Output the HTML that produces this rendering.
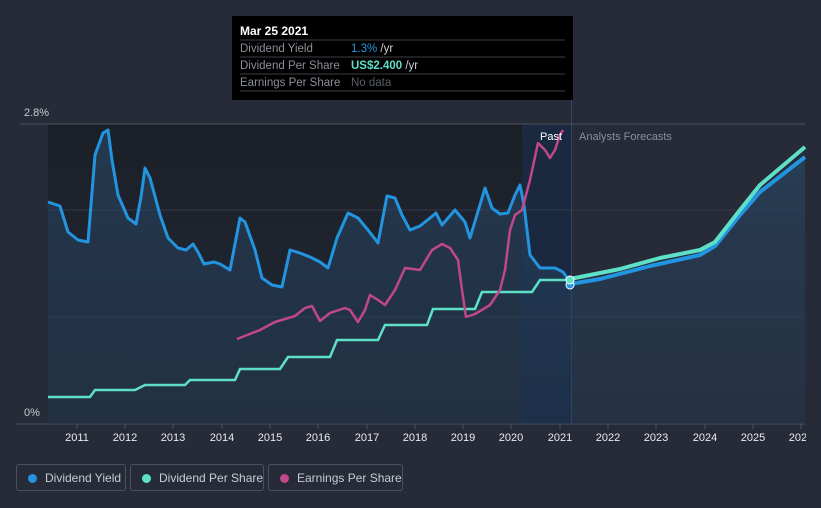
<!DOCTYPE html>
<html><head><style>
body{margin:0;width:821px;height:508px;background:#262b37;font-family:"Liberation Sans",sans-serif;overflow:hidden;position:relative}
.lg{position:absolute;top:464px;height:27px;border:1px solid #4a505c;border-radius:3px;color:#c8ccd2;font-size:12px;line-height:27px;box-sizing:border-box;white-space:nowrap}
.lg i{position:absolute;left:11px;top:9px;width:9px;height:9px;border-radius:50%}
</style></head><body>
<svg width="821" height="508" style="position:absolute;left:0;top:0">
<defs>
<linearGradient id="pg" x1="0" y1="0" x2="0" y2="1"><stop offset="0" stop-color="#1b1f27"/><stop offset="1" stop-color="#222a38"/></linearGradient>
<linearGradient id="bf" x1="0" y1="0" x2="0" y2="1"><stop offset="0" stop-color="#2a4a6a" stop-opacity=".6"/><stop offset="1" stop-color="#243a55" stop-opacity=".4"/></linearGradient>
<clipPath id="cl"><rect x="0" y="0" width="806" height="508"/></clipPath>
</defs>
<rect x="48" y="124" width="474" height="300" fill="url(#pg)"/>
<rect x="522" y="124" width="49" height="300" fill="#1a2940"/>
<rect x="571" y="100" width="1" height="324" fill="#2c4a70"/>
<line x1="20" y1="124" x2="805" y2="124" stroke="#4a505c"/>
<line x1="48" y1="210" x2="805" y2="210" stroke="#343a46"/>
<line x1="48" y1="317" x2="805" y2="317" stroke="#343a46"/>
<line x1="16" y1="424" x2="805" y2="424" stroke="#4a505c"/>
<g stroke="#4a505c"><line x1="77" y1="424" x2="77" y2="429"/><line x1="125" y1="424" x2="125" y2="429"/><line x1="173" y1="424" x2="173" y2="429"/><line x1="222" y1="424" x2="222" y2="429"/><line x1="270" y1="424" x2="270" y2="429"/><line x1="318" y1="424" x2="318" y2="429"/><line x1="367" y1="424" x2="367" y2="429"/><line x1="415" y1="424" x2="415" y2="429"/><line x1="463" y1="424" x2="463" y2="429"/><line x1="511" y1="424" x2="511" y2="429"/><line x1="560" y1="424" x2="560" y2="429"/><line x1="608" y1="424" x2="608" y2="429"/><line x1="656" y1="424" x2="656" y2="429"/><line x1="705" y1="424" x2="705" y2="429"/><line x1="753" y1="424" x2="753" y2="429"/><line x1="801" y1="424" x2="801" y2="429"/></g>
<path d="M48,202 L60,206 L68,232 L78,240 L88,242 L95,155 L103,133 L108,130 L112,160 L118,195 L128,218 L136,224 L141,197 L145,168 L150,178 L160,215 L168,238 L178,248 L186,250 L193,244 L198,252 L204,264 L214,262 L220,264 L230,270 L240,218 L245,222 L255,250 L262,278 L272,285 L282,287 L290,250 L300,253 L310,257 L320,262 L328,268 L337,238 L348,213 L358,218 L368,230 L378,243 L387,196 L395,198 L402,215 L410,230 L420,226 L430,218 L436,213 L442,225 L455,210 L465,222 L470,238 L485,188 L492,208 L500,214 L508,213 L515,195 L520,185 L524,205 L530,255 L540,268 L555,268 L563,272 L570,282 L600,278 L650,265 L700,254 L715,246 L760,192 L805,157 L805,424 L48,424Z" fill="url(#bf)"/>
<path d="M48,202 L60,206 L68,232 L78,240 L88,242 L95,155 L103,133 L108,130 L112,160 L118,195 L128,218 L136,224 L141,197 L145,168 L150,178 L160,215 L168,238 L178,248 L186,250 L193,244 L198,252 L204,264 L214,262 L220,264 L230,270 L240,218 L245,222 L255,250 L262,278 L272,285 L282,287 L290,250 L300,253 L310,257 L320,262 L328,268 L337,238 L348,213 L358,218 L368,230 L378,243 L387,196 L395,198 L402,215 L410,230 L420,226 L430,218 L436,213 L442,225 L455,210 L465,222 L470,238 L485,188 L492,208 L500,214 L508,213 L515,195 L520,185 L524,205 L530,255 L540,268 L555,268 L563,272 L570,282" fill="none" stroke="#2394df" stroke-width="3" stroke-linejoin="round"/>
<path d="M570,284 L600,279 L650,266 L700,255 L715,246 L740,215 L760,192 L805,157" fill="none" stroke="#2394df" stroke-width="4" stroke-linejoin="round"/>
<path d="M48,397 L90,397 L95,390 L135,390 L145,385 L185,385 L190,380 L235,380 L240,369 L280,369 L288,357 L330,357 L337,340 L378,340 L385,325 L427,325 L433,309 L475,309 L482,292 L532,292 L540,280 L570,280" fill="none" stroke="#5ee0c8" stroke-width="2.5"/>
<path d="M570,279 L620,269 L660,258 L700,250 L715,242 L740,210 L760,185 L805,147" fill="none" stroke="#5ee0c8" stroke-width="4" stroke-linejoin="round"/>
<path d="M237,339 L260,330 L275,322 L295,316 L305,308 L312,306 L320,321 L330,313 L345,308 L350,310 L358,322 L365,310 L370,295 L378,300 L385,305 L395,290 L405,268 L420,270 L432,250 L442,244 L450,248 L458,260 L462,290 L466,317 L475,314 L490,305 L500,290 L505,270 L510,230 L515,215 L522,210 L530,180 L538,143 L545,150 L550,158 L555,150 L560,135 L563,130" fill="none" stroke="#c0478a" stroke-width="2.5" stroke-linejoin="round"/>
<circle cx="570" cy="285" r="4" fill="#2394df" stroke="#fff" stroke-width="1"/>
<circle cx="570" cy="280" r="4" fill="#5ee0c8" stroke="#fff" stroke-width="1"/>
<g font-size="11" fill="#c8ccd2"><text x="24" y="116">2.8%</text><text x="24" y="416">0%</text></g>
<text x="540" y="140" font-size="11" fill="#fff">Past</text>
<text x="579" y="140" font-size="11" fill="#8a9099">Analysts Forecasts</text>
<g font-size="11" fill="#e8eaee" text-anchor="middle" clip-path="url(#cl)"><text x="77" y="441">2011</text><text x="125" y="441">2012</text><text x="173" y="441">2013</text><text x="222" y="441">2014</text><text x="270" y="441">2015</text><text x="318" y="441">2016</text><text x="367" y="441">2017</text><text x="415" y="441">2018</text><text x="463" y="441">2019</text><text x="511" y="441">2020</text><text x="560" y="441">2021</text><text x="608" y="441">2022</text><text x="656" y="441">2023</text><text x="705" y="441">2024</text><text x="753" y="441">2025</text><text x="801" y="441">2026</text></g>
<rect x="232" y="16" width="341" height="84" fill="#000"/>
<text x="240" y="35" font-size="12" font-weight="bold" fill="#fff">Mar 25 2021</text>
<g stroke="#3a3e46"><line x1="240" y1="40" x2="565" y2="40"/><line x1="240" y1="57" x2="565" y2="57"/><line x1="240" y1="74" x2="565" y2="74"/><line x1="240" y1="91" x2="565" y2="91"/></g>
<g font-size="11.5" fill="#8a8f98"><text x="240" y="52">Dividend Yield</text><text x="240" y="69">Dividend Per Share</text><text x="240" y="86">Earnings Per Share</text></g>
<text x="351" y="52" font-size="11.5"><tspan fill="#2394df">1.3%</tspan><tspan fill="#c8ccd2"> /yr</tspan></text>
<text x="351" y="69" font-size="11.5"><tspan fill="#5ee0c8" font-weight="bold">US$2.400</tspan><tspan fill="#c8ccd2"> /yr</tspan></text>
<text x="351" y="86" font-size="11.5" fill="#5a5f68">No data</text>
</svg>
<div class="lg" style="left:16px;width:110px"><i style="background:#2394df"></i><span style="position:absolute;left:28px">Dividend Yield</span></div>
<div class="lg" style="left:130px;width:134px"><i style="background:#5ee0c8"></i><span style="position:absolute;left:28px">Dividend Per Share</span></div>
<div class="lg" style="left:268px;width:135px"><i style="background:#c0478a"></i><span style="position:absolute;left:28px">Earnings Per Share</span></div>
</body></html>
